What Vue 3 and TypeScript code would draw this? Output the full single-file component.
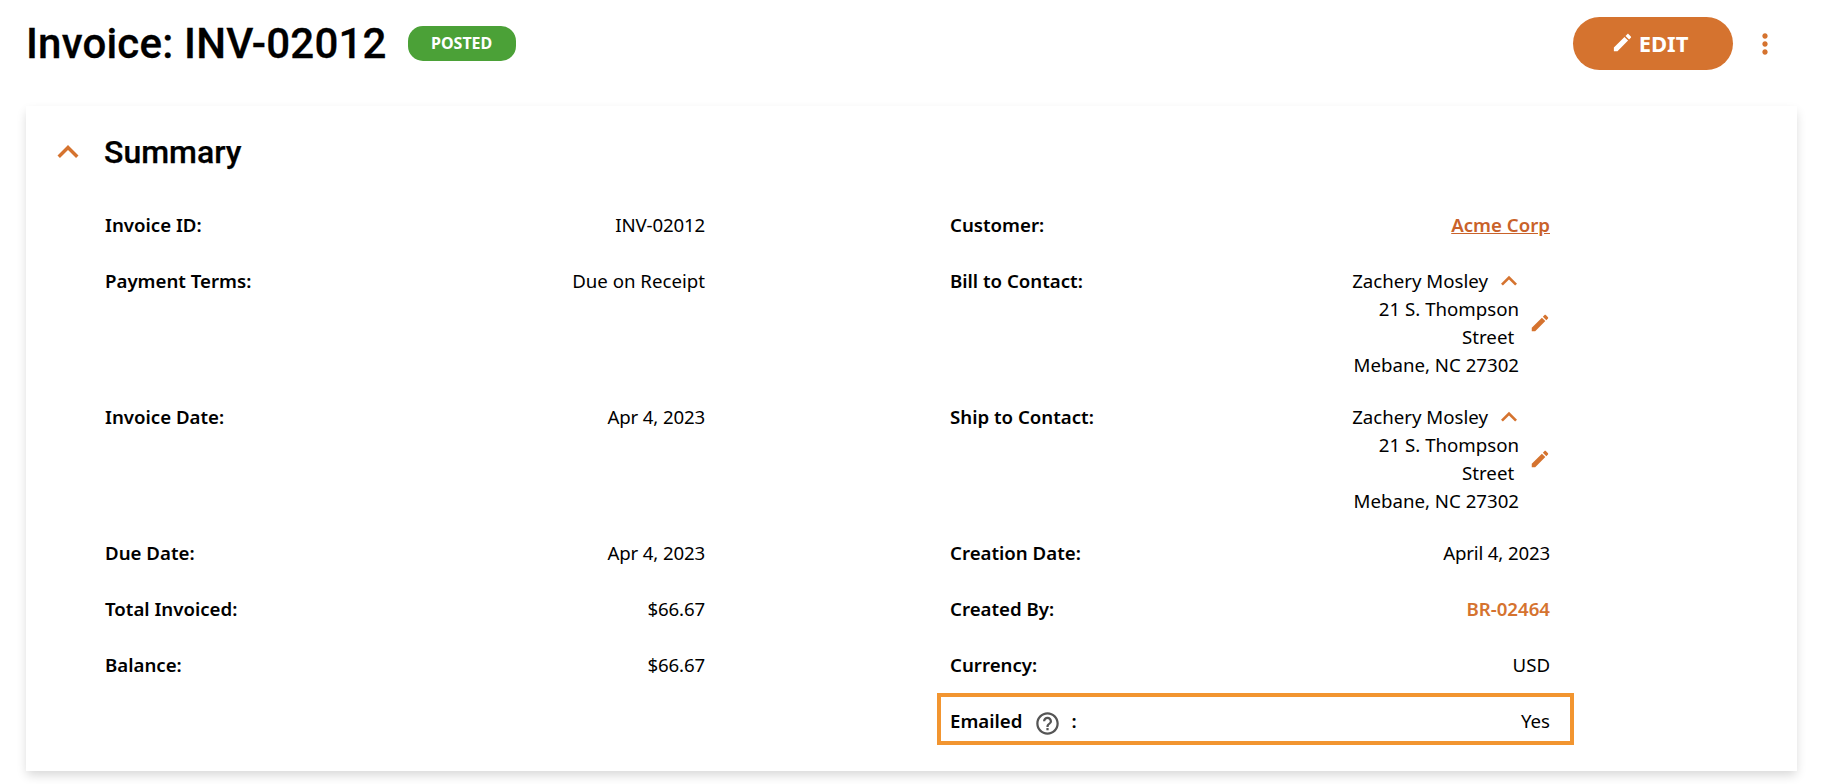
<script setup lang="ts">
interface Field {
  label: string
  value?: string
  kind?: 'link' | 'ref' | 'contact' | 'num'
}
const contactLines = ['21 S. Thompson', 'Street\u00a0', 'Mebane, NC 27302']
const rows: [Field, Field][] = [
  [{ label: 'Invoice ID:', value: 'INV-02012', kind: 'num' }, { label: 'Customer:', value: 'Acme Corp', kind: 'link' }],
  [{ label: 'Payment Terms:', value: 'Due on Receipt' }, { label: 'Bill to Contact:', kind: 'contact' }],
  [{ label: 'Invoice Date:', value: 'Apr 4, 2023', kind: 'num' }, { label: 'Ship to Contact:', kind: 'contact' }],
  [{ label: 'Due Date:', value: 'Apr 4, 2023', kind: 'num' }, { label: 'Creation Date:', value: 'April 4, 2023', kind: 'num' }],
  [{ label: 'Total Invoiced:', value: '$66.67', kind: 'num' }, { label: 'Created By:', value: 'BR-02464', kind: 'ref' }],
  [{ label: 'Balance:', value: '$66.67', kind: 'num' }, { label: 'Currency:', value: 'USD' }],
]
const pencil = 'M3 17.25V21h3.75L17.81 9.94l-3.75-3.75L3 17.25zM20.71 7.04c.39-.39.39-1.02 0-1.41l-2.34-2.34c-.39-.39-1.02-.39-1.41 0l-1.83 1.83 3.75 3.75 1.83-1.83z'
const chevron = 'M12 8l-6 6 1.41 1.41L12 10.83l4.59 4.58L18 14z'
</script>

<template>
  <div class="page">
    <header class="header">
      <h1 class="title">Invoice: INV-02012</h1>
      <span class="badge">POSTED</span>
      <button class="edit" type="button">
        <svg class="edit-icon" viewBox="0 0 24 24"><path :d="pencil" /></svg>
        EDIT
      </button>
      <svg class="more" viewBox="0 0 24 24"><path d="M12 8c1.1 0 2-.9 2-2s-.9-2-2-2-2 .9-2 2 .9 2 2 2zm0 2c-1.1 0-2 .9-2 2s.9 2 2 2 2-.9 2-2-.9-2-2-2zm0 6c-1.1 0-2 .9-2 2s.9 2 2 2 2-.9 2-2-.9-2-2-2z" /></svg>
    </header>

    <section class="card">
      <div class="section-head">
        <svg class="section-chevron" viewBox="0 0 24 24"><path :d="chevron" /></svg>
        <h2 class="section-title">Summary</h2>
      </div>

      <div class="grid">
        <template v-for="(row, i) in rows" :key="i">
          <div v-for="field in row" :key="field.label" class="field" :class="{ tall: field.kind === 'contact' }">
            <span class="label">{{ field.label }}</span>
            <div v-if="field.kind === 'contact'" class="contact">
              <div class="contact-text">
                <div class="contact-name">
                  Zachery Mosley
                  <svg class="mini-chevron" viewBox="0 0 24 24"><path :d="chevron" /></svg>
                </div>
                <div v-for="line in contactLines" :key="line">{{ line }}</div>
              </div>
              <svg class="mini-pencil" viewBox="0 0 24 24"><path :d="pencil" /></svg>
            </div>
            <a v-else-if="field.kind === 'link'" class="link" href="#">{{ field.value }}</a>
            <span v-else-if="field.kind === 'ref'" class="ref">{{ field.value }}</span>
            <span v-else :class="{ num: field.kind === 'num' }">{{ field.value }}</span>
          </div>
        </template>
        <div class="field empty"></div>
        <div class="field highlighted">
          <span class="label emailed">
            Emailed
            <svg class="help" viewBox="0 0 24 24"><path d="M11 18h2v-2h-2v2zm1-16C6.48 2 2 6.48 2 12s4.48 10 10 10 10-4.48 10-10S17.52 2 12 2zm0 18c-4.41 0-8-3.59-8-8s3.59-8 8-8 8 3.59 8 8-3.59 8-8 8zm0-14c-2.21 0-4 1.79-4 4h2c0-1.1.9-2 2-2s2 .9 2 2c0 2-3 1.75-3 5h2c0-2.25 3-2.5 3-5 0-2.21-1.79-4-4-4z" /></svg>
            :
          </span>
          <span>Yes</span>
        </div>
      </div>
    </section>
  </div>
</template>

<style scoped>
.page {
  width: 1826px;
  box-sizing: border-box;
  padding: 0 29px 13px 26px;
  color: #000;
  font-family: "Noto Sans", sans-serif;
  font-size: 18.67px;
  line-height: 28px;
}
.header {
  display: flex;
  align-items: center;
  height: 87px;
  margin-bottom: 19px;
}
.title {
  margin: 0;
  font-family: Roboto, sans-serif;
  font-size: 42px;
  line-height: 52px;
  font-weight: 500;
  letter-spacing: 0.2px;
  -webkit-text-stroke: 0.3px #000;
}
.badge {
  margin-left: 21px;
  width: 108px;
  height: 35px;
  border-radius: 15px;
  background: #4ba137;
  color: #fff;
  font-size: 16px;
  line-height: 35px;
  font-weight: 700;
  text-align: center;
}
.edit {
  margin-left: auto;
  display: flex;
  align-items: center;
  justify-content: center;
  gap: 5px;
  width: 160px;
  height: 53px;
  padding: 0 7px 2px 0;
  border: 0;
  border-radius: 27px;
  background: #d5732f;
  color: #fff;
  font-family: "Noto Sans", sans-serif;
  font-size: 22px;
  font-weight: 700;
}
.edit-icon {
  width: 23px;
  height: 23px;
  fill: #fff;
}
.more {
  width: 32px;
  height: 32px;
  margin: 0 16px 0 16px;
  fill: #d5732f;
}
.card {
  background: #fff;
  height: 665px;
  box-sizing: border-box;
  padding: 0 0 0 79px;
  box-shadow: 0 5px 10px -1px rgba(0, 0, 0, 0.16);
}
.section-head {
  position: relative;
  display: flex;
  align-items: center;
  height: 91px;
}
.section-chevron {
  position: absolute;
  left: -58px;
  top: 25px;
  width: 42px;
  height: 42px;
  fill: #d5732f;
}
.section-title {
  margin: 0 0 0 -1px;
  font-family: Roboto, sans-serif;
  font-size: 32px;
  line-height: 40px;
  font-weight: 500;
  -webkit-text-stroke: 0.25px #000;
}
.grid {
  display: grid;
  grid-template-columns: 600px 600px;
  column-gap: 245px;
}
.field {
  display: flex;
  justify-content: space-between;
  align-items: flex-start;
  padding: 14px 0;
}
.field.tall {
  padding: 14px 0 10px;
}
.label {
  font-weight: 600;
}
.num {
  letter-spacing: -0.15px;
}
.link,
.ref {
  font-weight: 600;
  color: #d5732f;
}
.link {
  color: #c9622a;
  text-decoration: underline;
}
.contact {
  display: flex;
  align-items: center;
  gap: 10px;
  margin-right: -1px;
  text-align: right;
}
.contact-name {
  display: flex;
  align-items: center;
  justify-content: flex-end;
  gap: 5px;
  height: 28px;
}
.mini-chevron {
  width: 32px;
  height: 32px;
  margin-right: -6px;
  fill: #d5732f;
}
.mini-pencil {
  width: 22px;
  height: 22px;
  fill: #d5732f;
}
.highlighted {
  position: relative;
}
.highlighted::after {
  content: "";
  position: absolute;
  inset: 0 -24px 4px -13px;
  border: 4px solid #f29530;
  pointer-events: none;
}
.emailed {
  display: flex;
  align-items: center;
  gap: 11px;
}
.help {
  width: 27px;
  height: 27px;
  margin: 1px -1px -3px 1px;
  fill: #555;
}
</style>

<style>
body {
  background: #fff;
}
</style>
